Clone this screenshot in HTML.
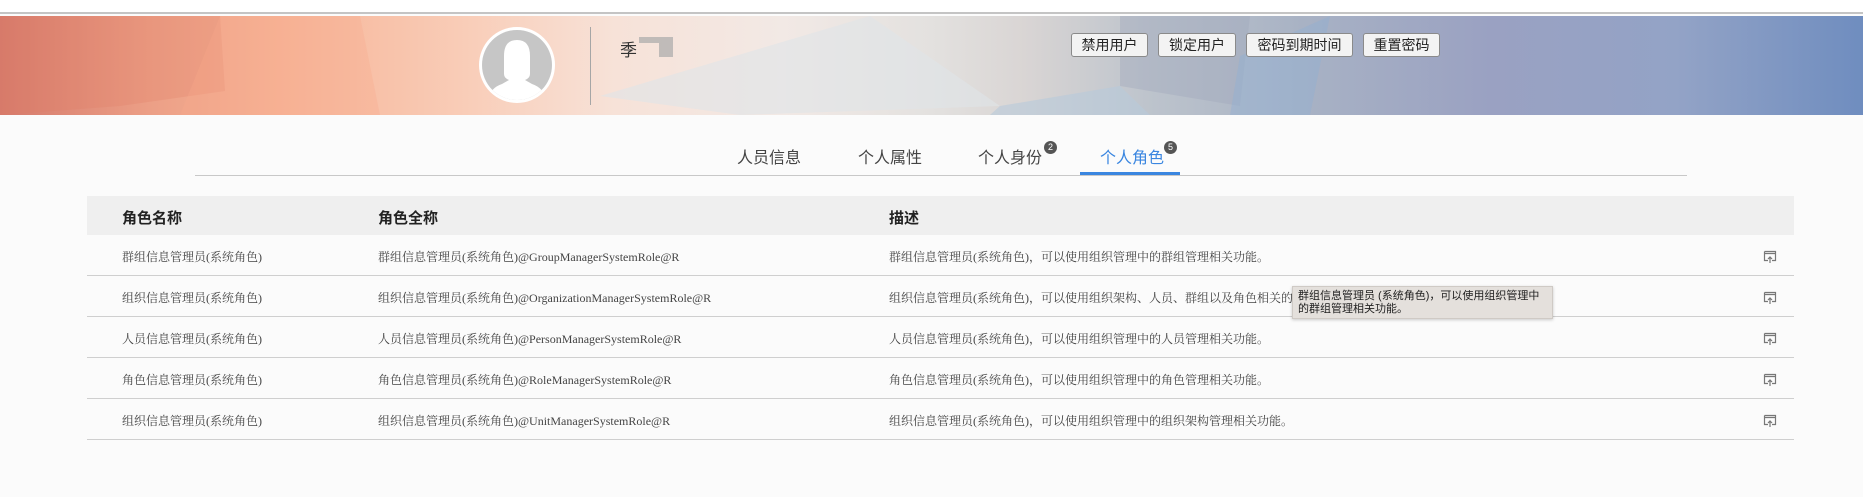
<!DOCTYPE html>
<html><head><meta charset="utf-8"><style>
*{margin:0;padding:0;box-sizing:border-box}
body{width:1863px;height:497px;background:#fbfbfb;position:relative;overflow:hidden;font-family:"Liberation Sans","Noto Sans CJK SC",sans-serif}
.a{position:absolute}
#top{left:0;top:0;width:1863px;height:14px;background:#fff;border-bottom:2px solid #c4c4c4}
#ban{left:0;top:16px;width:1863px;height:99px;background:linear-gradient(90deg,#d57a6c 0%,#ec9f86 8%,#f6b497 15%,#f9cdb8 25%,#f7e2d8 33%,#f2e9e5 42%,#e3e1df 50%,#d9d5d4 55%,#bcc3cc 62%,#a8b2c4 70%,#9aa1c2 80%,#93a3c6 90%,#6f8dbf 100%);overflow:hidden}
.btn{top:33px;height:24px;border:1px solid #8a8a8a;border-radius:3px;background:#f3f3f3;font-size:14px;color:#222;text-align:center;line-height:22px}
.tab{top:144px;font-size:16px;color:#444}
.badge{top:141px;width:13px;height:13px;border-radius:7px;background:#555;color:#fff;font-size:9px;text-align:center;line-height:13px}
.th{top:196px;left:87px;width:1707px;height:39px;background:#efefef}
.hd{font-size:15px;font-weight:bold;color:#222;top:207px}
.row{left:87px;width:1707px;height:41px;border-bottom:1px solid #cfcfcf}
.c{font-family:"Liberation Serif","Noto Serif CJK SC",serif;font-size:12px;color:#444}
.ic{width:14px;height:14px}
</style></head><body>
<div class="a" id="top"></div>
<div class="a" id="ban">
<svg width="1863" height="99" style="position:absolute;left:0;top:0">
<polygon points="0,0 220,0 225,75 120,90 0,99" fill="#e07a64" opacity=".25"/>
<polygon points="220,0 360,0 380,99 180,99" fill="#f7a88a" opacity=".3"/>
<polygon points="600,80 870,0 1000,90 740,99" fill="#e0e5e8" opacity=".6"/>
<polygon points="1000,90 1120,70 1150,99 990,99" fill="#b8cadb" opacity=".6"/>
<polygon points="1120,0 1250,0 1240,90 1120,70" fill="#a0a8bb" opacity=".4"/>
<polygon points="1240,40 1330,0 1310,99 1230,99" fill="#8fb0d4" opacity=".4"/>
</svg>
</div>
<div class="a" style="left:479px;top:27px;width:76px;height:76px;border-radius:50%;background:#fff"></div>
<div class="a" style="left:482px;top:30px;width:70px;height:70px;border-radius:50%;background:#c6c6c6;overflow:hidden">
<svg width="70" height="70"><path d="M22 26 Q22 10 35 10 Q48 10 48 26 L48 44 Q48 48 43 50 L50 54 Q62 58 64 70 L6 70 Q8 58 20 54 L27 50 Q22 48 22 44 Z" fill="#fff"/></svg></div>
<div class="a" style="left:590px;top:27px;width:1px;height:78px;background:#a6a6a6"></div>
<div class="a" style="left:620px;top:36px;font-size:17px;color:#333">季</div>
<div class="a" style="left:639px;top:37px;width:20px;height:6px;background:#aaa;opacity:.7"></div>
<div class="a" style="left:659px;top:37px;width:14px;height:20px;background:#aaa;opacity:.7"></div>
<div class="a btn" style="left:1071px;width:77px">禁用用户</div>
<div class="a btn" style="left:1158px;width:78px">锁定用户</div>
<div class="a btn" style="left:1246px;width:107px">密码到期时间</div>
<div class="a btn" style="left:1363px;width:77px">重置密码</div>
<div class="a tab" style="left:737px">人员信息</div>
<div class="a tab" style="left:858px">个人属性</div>
<div class="a tab" style="left:978px">个人身份</div>
<div class="a tab" style="left:1100px;color:#3a86e0">个人角色</div>
<div class="a badge" style="left:1044px">2</div>
<div class="a badge" style="left:1164px">5</div>
<div class="a" style="left:195px;top:175px;width:1492px;height:1px;background:#c8c8c8"></div>
<div class="a" style="left:1080px;top:172px;width:100px;height:3px;background:#3a86e0"></div>
<div class="a th"></div>
<div class="a hd" style="left:122px">角色名称</div>
<div class="a hd" style="left:378px">角色全称</div>
<div class="a hd" style="left:889px">描述</div>

<div class="a row" style="top:235px"></div>
<div class="a row" style="top:276px"></div>
<div class="a row" style="top:317px"></div>
<div class="a row" style="top:358px"></div>
<div class="a row" style="top:399px"></div>

<div class="a c" style="left:122px;top:248px">群组信息管理员(系统角色)</div>
<div class="a c" style="left:378px;top:248px">群组信息管理员(系统角色)@GroupManagerSystemRole@R</div>
<div class="a c" style="left:889px;top:248px">群组信息管理员(系统角色)，可以使用组织管理中的群组管理相关功能。</div>
<div class="a c" style="left:122px;top:289px">组织信息管理员(系统角色)</div>
<div class="a c" style="left:378px;top:289px">组织信息管理员(系统角色)@OrganizationManagerSystemRole@R</div>
<div class="a c" style="left:889px;top:289px">组织信息管理员(系统角色)，可以使用组织架构、人员、群组以及角色相关的</div>
<div class="a c" style="left:122px;top:330px">人员信息管理员(系统角色)</div>
<div class="a c" style="left:378px;top:330px">人员信息管理员(系统角色)@PersonManagerSystemRole@R</div>
<div class="a c" style="left:889px;top:330px">人员信息管理员(系统角色)，可以使用组织管理中的人员管理相关功能。</div>
<div class="a c" style="left:122px;top:371px">角色信息管理员(系统角色)</div>
<div class="a c" style="left:378px;top:371px">角色信息管理员(系统角色)@RoleManagerSystemRole@R</div>
<div class="a c" style="left:889px;top:371px">角色信息管理员(系统角色)，可以使用组织管理中的角色管理相关功能。</div>
<div class="a c" style="left:122px;top:412px">组织信息管理员(系统角色)</div>
<div class="a c" style="left:378px;top:412px">组织信息管理员(系统角色)@UnitManagerSystemRole@R</div>
<div class="a c" style="left:889px;top:412px">组织信息管理员(系统角色)，可以使用组织管理中的组织架构管理相关功能。</div>

<svg class="a ic" style="left:1763px;top:250px" viewBox="0 0 14 14"><path d="M1.5 1.5h11v9h-3.5M5 10.5H1.5v-9M1.5 3.5h11M7 13V7M5 9l2-2 2 2" fill="none" stroke="#777" stroke-width="1.2"/></svg>
<svg class="a ic" style="left:1763px;top:291px" viewBox="0 0 14 14"><path d="M1.5 1.5h11v9h-3.5M5 10.5H1.5v-9M1.5 3.5h11M7 13V7M5 9l2-2 2 2" fill="none" stroke="#777" stroke-width="1.2"/></svg>
<svg class="a ic" style="left:1763px;top:332px" viewBox="0 0 14 14"><path d="M1.5 1.5h11v9h-3.5M5 10.5H1.5v-9M1.5 3.5h11M7 13V7M5 9l2-2 2 2" fill="none" stroke="#777" stroke-width="1.2"/></svg>
<svg class="a ic" style="left:1763px;top:373px" viewBox="0 0 14 14"><path d="M1.5 1.5h11v9h-3.5M5 10.5H1.5v-9M1.5 3.5h11M7 13V7M5 9l2-2 2 2" fill="none" stroke="#777" stroke-width="1.2"/></svg>
<svg class="a ic" style="left:1763px;top:414px" viewBox="0 0 14 14"><path d="M1.5 1.5h11v9h-3.5M5 10.5H1.5v-9M1.5 3.5h11M7 13V7M5 9l2-2 2 2" fill="none" stroke="#777" stroke-width="1.2"/></svg>

<div class="a" style="left:1292px;top:286px;width:261px;height:33px;background:#e4e0dc;border:1px solid #cfcac5;box-shadow:0 1px 3px rgba(0,0,0,.2);font-size:11px;color:#222;line-height:13px;padding:3px 5px;white-space:nowrap">群组信息管理员 (系统角色)，可以使用组织管理中<br>的群组管理相关功能。</div>
</body></html>
